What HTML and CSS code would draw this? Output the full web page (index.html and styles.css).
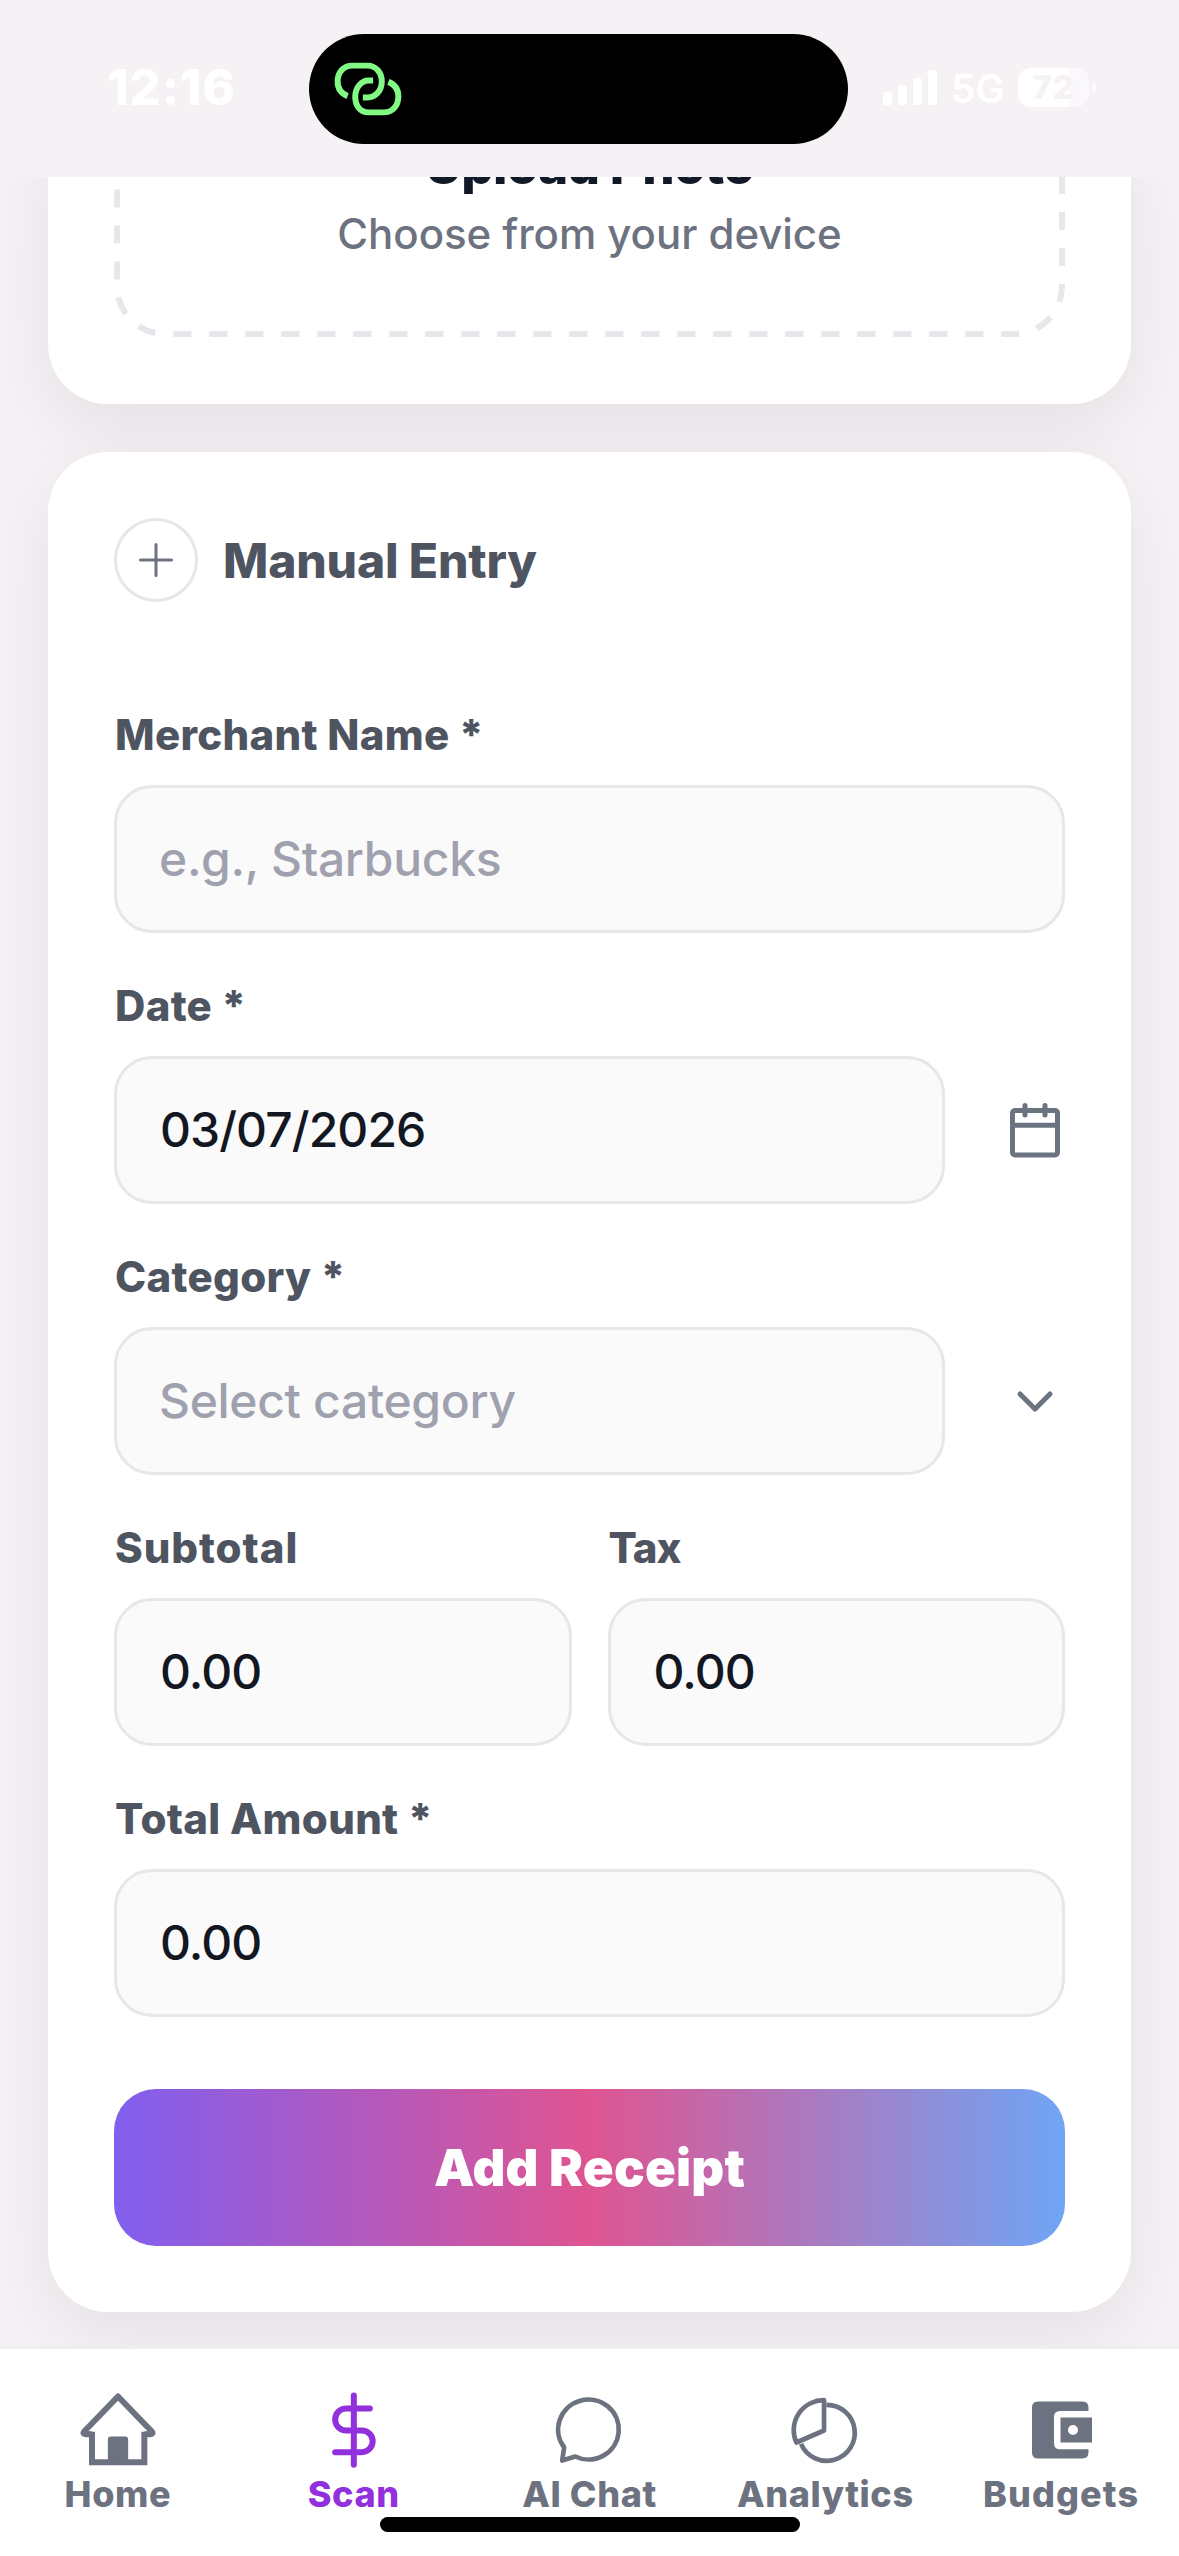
FILE: index.html
```html
<!DOCTYPE html>
<html lang="en">
<head>
<meta charset="utf-8">
<title>Scan receipt</title>
<link rel="stylesheet" href="styles.css">
</head>
<body>
<div class="screen">
  <header class="status">
    <span class="clock">12:16</span>
    <div class="island">
      <svg class="link-icon" viewBox="69 80 211 167" fill="none" stroke="#82f984" stroke-width="18">
        <path d="M113 185C93 177 83 160 83 141C83 113 101 93 127 93H173C199 93 216 114 216 140C216 168 198 189 173 189H159"/>
        <path d="M236 142C256 150 266 167 266 186C266 214 248 234 222 234H176C150 234 136 213 136 187C136 159 155 138 176 138H190"/>
      </svg>
    </div>
    <div class="signals">
      <svg class="bars" viewBox="0 0 54 35" fill="#fff">
        <rect x="0" y="22" width="9" height="13" rx="2.5"/>
        <rect x="15" y="15" width="9" height="20" rx="2.5"/>
        <rect x="30" y="8" width="9" height="27" rx="2.5"/>
        <rect x="45" y="0" width="9" height="35" rx="2.5"/>
      </svg>
      <span class="network">5G</span>
      <div class="battery">72</div>
      <i class="battery-tip"></i>
    </div>
  </header>

  <main class="content">
    <section class="card upload">
      <div class="dropzone">
        <svg class="dashes" viewBox="114 117 951 220" fill="none" stroke="#e5e7eb" stroke-width="6">
          <path stroke-dasharray="18 18" d="M1062 140V286A48 48 0 0 1 1014 334H165A48 48 0 0 1 117 286V117"/>
        </svg>
        <h2 class="upload-title">Upload Photo</h2>
        <p class="upload-hint">Choose from your device</p>
      </div>
    </section>

    <section class="card form">
      <div class="form-head">
        <div class="plus">
          <svg viewBox="0 0 34 34" stroke="#6b7280" stroke-width="3" stroke-linecap="round"><path d="M17 1.5V32.5M1.5 17H32.5"/></svg>
        </div>
        <h2 class="form-title">Manual Entry</h2>
      </div>

      <div class="field">
        <div class="label">Merchant Name *</div>
        <div class="input placeholder">e.g., Starbucks</div>
      </div>
      <div class="field">
        <div class="label">Date *</div>
        <div class="with-icon">
          <div class="input number">03/07/2026</div>
          <svg viewBox="0 0 60 60" fill="none" stroke="#6b7280" stroke-width="5" stroke-linecap="round">
            <rect x="7.5" y="10.5" width="45" height="44.5" rx="2.5"/>
            <path d="M7.5 25.3H52.5M20 5.5V15M40 5.5V15"/>
          </svg>
        </div>
      </div>
      <div class="field">
        <div class="label">Category *</div>
        <div class="with-icon">
          <div class="input placeholder">Select category</div>
          <svg viewBox="0 0 60 60" fill="none" stroke="#6b7280" stroke-width="5" stroke-linecap="round" stroke-linejoin="round">
            <path d="M15 23L30 38L45 23"/>
          </svg>
        </div>
      </div>
      <div class="field pair">
        <div>
          <div class="label wide">Subtotal</div>
          <div class="input number">0.00</div>
        </div>
        <div>
          <div class="label tight">Tax</div>
          <div class="input number">0.00</div>
        </div>
      </div>
      <div class="field">
        <div class="label">Total Amount *</div>
        <div class="input number">0.00</div>
      </div>
      <button class="submit">Add Receipt</button>
    </section>
  </main>

  <nav class="tabs">
    <a class="tab">
      <svg viewBox="55.5 61.5 234 234" fill="none" stroke="currentColor" stroke-width="18">
        <path stroke-linejoin="round" d="M94.5 191.5H76Q65 191 71 183L172.5 78L274 183Q280 191 269 191.5H251.5"/>
        <path d="M94.5 184V275H251.5V184"/>
        <rect x="142" y="198" width="61" height="74" rx="9" fill="currentColor" stroke="none"/>
      </svg>
      <span>Home</span>
    </a>
    <a class="tab active">
      <svg viewBox="763.5 61.5 234 234" fill="none" stroke="currentColor" stroke-width="18" stroke-linecap="round">
        <path d="M880 75V283M928 114H857A33 33 0 0 0 857 180H904A32.5 32.5 0 0 1 904 245H824"/>
      </svg>
      <span>Scan</span>
    </a>
    <a class="tab">
      <svg viewBox="31.5 61.5 234 234" fill="none" stroke="currentColor" stroke-width="14" stroke-linejoin="round">
        <path d="M74 231A91 90 0 1 1 107 258L68 270Z"/>
      </svg>
      <span>AI Chat</span>
    </a>
    <a class="tab">
      <svg viewBox="738.9 61.5 234 234" fill="none" stroke="currentColor" stroke-width="14" stroke-linejoin="round">
        <path d="M853 180V89A90 90 0 0 0 770 216Z"/>
        <path d="M860 103A84 84 0 1 1 784 220"/>
      </svg>
      <span>Analytics</span>
    </a>
    <a class="tab">
      <svg viewBox="0 0 78 78" fill="currentColor" fill-rule="evenodd">
        <path d="M16 10.5H60.5Q66.5 10.5 66.5 16.5V20H38Q32 20 32 26V52Q32 58.3 38 58.3H66.5V61Q66.5 67.5 60.5 67.5H16Q10 67.5 10 61.5V16.5Q10 10.5 16 10.5Z"/>
        <path d="M38.5 26.6H70V51.6H38.5ZM56 39A5 5 0 1 0 46 39A5 5 0 1 0 56 39Z"/>
      </svg>
      <span class="wide">Budgets</span>
    </a>
    <i class="home-indicator"></i>
  </nav>
</div>
</body>
</html>
```

FILE: styles.css
```css
* { box-sizing: border-box; margin: 0; padding: 0; }
body {
  width: 1179px;
  height: 2556px;
  overflow: hidden;
  background: #f5f1f5;
  font-family: Inter, "Liberation Sans", sans-serif;
}
svg { display: block; flex: none; }

.screen { display: grid; grid-template-rows: 177px 2169px 210px; height: 2556px; }

/* Status bar */
.status {
  display: grid;
  grid-template-columns: 309px 539px 1fr;
  padding-top: 34px;
  color: #fff;
}
.clock { padding-left: 107px; font-size: 49px; font-weight: 800; line-height: 107px; letter-spacing: .9px; }
.island {
  display: flex;
  align-items: center;
  height: 110px;
  padding: 0 24px;
  border-radius: 55px;
  background: #000;
}
.link-icon { width: 70px; height: 56px; }
.signals { display: flex; height: 110px; padding-left: 35px; }
.bars { width: 54px; height: 35px; margin-top: 36px; }
.network { width: 81px; padding-left: 14px; font-size: 39px; font-weight: 600; line-height: 110px; }
.battery {
  width: 71px;
  height: 39px;
  margin-top: 34px;
  border-radius: 13px;
  background: linear-gradient(90deg, #fff 51px, #fbf8fb 51px);
  color: #f5f1f5;
  font-size: 33px;
  font-weight: 800;
  line-height: 39px;
  letter-spacing: 1px;
  text-align: center;
}
.battery-tip { width: 4px; height: 12px; margin: 47px 0 0 3px; border-radius: 0 4px 4px 0; background: #fbf8fb; }

/* Cards */
.content { overflow: hidden; padding: 0 48px; }
.card { border-radius: 60px; background: #fff; box-shadow: 0 24px 72px rgba(0, 0, 0, .07); }
.upload { height: 287px; margin-top: -60px; padding: 0 66px; }
.dropzone { position: relative; height: 220px; padding-top: 15px; text-align: center; }
.dashes { position: absolute; inset: 0; width: 951px; height: 220px; }
.upload-title {
  height: 66px;
  color: #111827;
  font-size: 51px;
  font-weight: 800;
  line-height: 68px;
  letter-spacing: -.7px;
}
.upload-hint { margin-top: 9px; color: #6d7280; font-size: 42px; font-weight: 500; line-height: 54px; letter-spacing: -.05px; }

.form { height: 1860px; margin-top: 48px; padding: 66px; }
.form-head { display: flex; align-items: center; gap: 25px; height: 84px; margin-bottom: 106px; }
.plus {
  display: grid;
  place-items: center;
  width: 84px;
  height: 84px;
  border: 3px solid #e5e7eb;
  border-radius: 50%;
}
.plus svg { width: 34px; height: 34px; }
.form-title { color: #4e5561; font-size: 48px; font-weight: 800; letter-spacing: -.15px; }

.field { margin-bottom: 46px; }
.label {
  margin-bottom: 23px;
  padding-left: 1px;
  color: #4e5561;
  font-size: 42px;
  font-weight: 800;
  line-height: 54px;
  letter-spacing: .3px;
}
.label.wide { letter-spacing: .95px; }
.label.tight { letter-spacing: -1px; }
.input {
  flex: 1;
  height: 148px;
  padding-left: 42px;
  border: 3px solid #e5e7eb;
  border-radius: 38px;
  background: #fafafb;
  color: #131722;
  font-size: 48px;
  font-weight: 500;
  line-height: 142px;
}
.input.number { padding-left: 43px; letter-spacing: -.9px; }
.input.placeholder { color: #9fa2ae; letter-spacing: -.32px; }
.with-icon { display: flex; align-items: center; gap: 60px; }
.with-icon svg { width: 60px; height: 60px; }
.pair { display: grid; grid-template-columns: 1fr 1fr; gap: 36px; }

.submit {
  display: block;
  width: 100%;
  height: 157px;
  margin-top: 72px;
  border: 0;
  border-radius: 42px;
  background: linear-gradient(90deg, #815fee, #df5491 50%, #6fa5f5);
  color: #fff;
  font: 900 51px/157px Inter, "Liberation Sans", sans-serif;
  letter-spacing: .2px;
}

/* Tab bar */
.tabs {
  position: relative;
  display: flex;
  padding-top: 41.5px;
  border-top: 3px solid #eeedf0;
  background: #fff;
}
.tab { display: flex; flex: 1; flex-direction: column; align-items: center; gap: 4.5px; color: #6d7280; }
.tab svg { width: 78px; height: 78px; }
.tab span { font-size: 36px; font-weight: 800; line-height: 42px; letter-spacing: .6px; white-space: nowrap; }
.tab span.wide { letter-spacing: 1.1px; }
.tab.active { color: #9130dc; }
.home-indicator {
  position: absolute;
  left: 380px;
  bottom: 24px;
  width: 420px;
  height: 15px;
  border-radius: 8px;
  background: #000;
}
```
